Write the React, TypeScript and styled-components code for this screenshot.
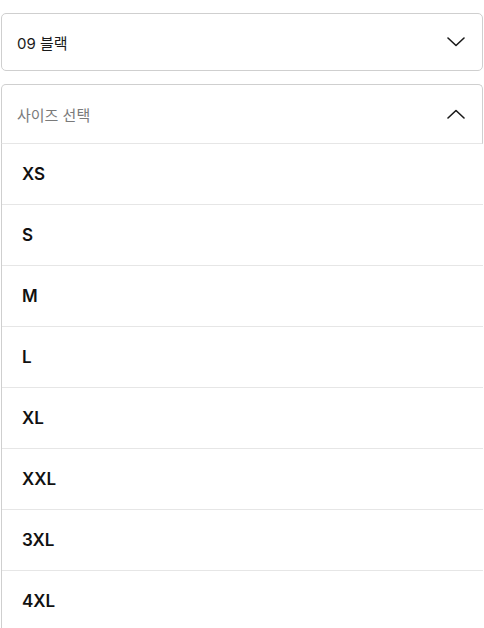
import React from "react";
import styled, { createGlobalStyle } from "styled-components";

const Global = createGlobalStyle`
  html, body { margin: 0; padding: 0; background: #fff; }
  body { font-family: "Inter", "Noto Sans CJK KR", sans-serif; color: #111; }
`;

const Page = styled.div`
  display: flex;
  flex-direction: column;
  gap: 13px;
  padding: 13px 1px 0 1px;
`;

const Select = styled.div`
  display: flex;
  align-items: center;
  justify-content: space-between;
  height: 56px;
  padding: 0 17px 0 15px;
  border: 1px solid #cfcfcf;
  border-radius: 5px;
  font-size: 15px;
  color: #1a1a1a;
`;

const Panel = styled.div`
  display: flex;
  flex-direction: column;
`;

const PanelHeader = styled.div`
  display: flex;
  align-items: center;
  justify-content: space-between;
  height: 58px;
  padding: 0 17px 0 15px;
  border: 1px solid #cfcfcf;
  border-bottom: 1px solid #e6e6e6;
  border-radius: 5px 5px 0 0;
  font-size: 15px;
  color: #7a7a7a;
`;

const List = styled.ul`
  list-style: none;
  margin: 0;
  padding: 0;
  border-left: 1px solid #cfcfcf;
`;

const Row = styled.li`
  display: flex;
  align-items: center;
  height: 59px;
  padding: 0 0 1px 20px;
  border-bottom: 1px solid #e6e6e6;
  font-size: 17px;
  font-weight: 600;
  color: #111;
`;

const Chevron = ({ up }: { up?: boolean }) => (
  <svg width="18" height="10" viewBox="0 0 18 10" fill="none">
    <path
      d={up ? "M1 9L9 1.5L17 9" : "M1 1L9 8.5L17 1"}
      stroke="#1a1a1a"
      strokeWidth="1.6"
      strokeLinecap="round"
      strokeLinejoin="round"
    />
  </svg>
);

const sizes = ["XS", "S", "M", "L", "XL", "XXL", "3XL", "4XL"];

export default function App() {
  return (
    <>
      <Global />
      <Page>
        <Select>
          <span>09 블랙</span>
          <Chevron />
        </Select>
        <Panel>
          <PanelHeader>
            <span>사이즈 선택</span>
            <Chevron up />
          </PanelHeader>
          <List>
            {sizes.map((s) => (
              <Row key={s}>{s}</Row>
            ))}
          </List>
        </Panel>
      </Page>
    </>
  );
}
